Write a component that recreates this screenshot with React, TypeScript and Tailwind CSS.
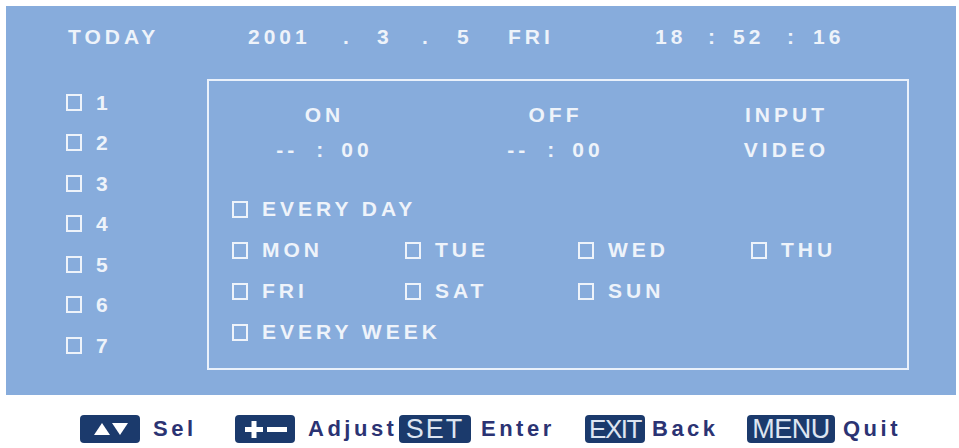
import React from "react";

const FONT = { fontFamily: '"Liberation Sans", Arial, sans-serif' };

const Box: React.FC<{ className?: string }> = ({ className = "" }) => (
  <span className={`inline-block shrink-0 w-[16px] h-[17px] border-2 border-[#eef3fa] ${className}`} />
);

const Check: React.FC<{ label: string; wide?: boolean }> = ({ label, wide }) => (
  <div className={`flex items-center shrink-0 ${wide ? "" : "w-[173px]"}`}>
    <Box className="mr-[14px]" />
    <span>{label}</span>
  </div>
);

const Badge: React.FC<{ w: string; children: React.ReactNode }> = ({ w, children }) => (
  <div className={`${w} shrink-0 h-[28px] rounded-[4px] bg-[#1b3a6c] flex items-center justify-center`}>
    {children}
  </div>
);

export default function App() {
  const slots = ["1", "2", "3", "4", "5", "6", "7"];

  return (
    <div className="w-[959px] h-[448px] bg-white overflow-hidden pt-[6px]" style={FONT}>
      <div className="ml-[6px] w-[950px] h-[389px] bg-[#87acdc] flex flex-col pt-[20px] font-bold text-[21px] tracking-[4px] text-[#eef3fa]">
        {/* header */}
        <div className="flex pl-[62px] leading-[22px]">
          <span className="w-[180px]">TODAY</span>
          <span className="w-[95px]">2001</span>
          <span className="w-[34px]">.</span>
          <span className="w-[45px]">3</span>
          <span className="w-[35px]">.</span>
          <span className="w-[51px]">5</span>
          <span className="w-[147px]">FRI</span>
          <span className="w-[53px]">18</span>
          <span className="w-[25px]">:</span>
          <span className="w-[54px]">52</span>
          <span className="w-[26px]">:</span>
          <span>16</span>
        </div>

        <div className="flex mt-[31px]">
          {/* slot list */}
          <div className="w-[201px] shrink-0 pl-[60px] pt-[3px] flex flex-col">
            {slots.map(s => (
              <div key={s} className="h-[40.5px] flex items-center">
                <Box className="mr-[14px]" />
                <span>{s}</span>
              </div>
            ))}
          </div>

          {/* timer box */}
          <div className="w-[702px] shrink-0 h-[291px] border-2 border-[#eaf1fb] pt-[22px]">
            <div className="grid grid-cols-[231px_231px_231px] leading-[24px] text-center">
              <span>ON</span>
              <span>OFF</span>
              <span>INPUT</span>
            </div>
            <div className="grid grid-cols-[231px_231px_231px] leading-[24px] mt-[11px]">
              {["--", "--"].map((d, i) => (
                <div key={i} className="flex justify-center">
                  <span>{d}</span>
                  <span className="ml-[18px]">:</span>
                  <span className="ml-[14px]">00</span>
                </div>
              ))}
              <span className="text-center">VIDEO</span>
            </div>
            <div className="mt-[26.5px] pl-[23px] flex flex-col">
              <div className="h-[41px] flex items-center">
                <Check label="EVERY DAY" wide />
              </div>
              <div className="h-[41px] flex items-center">
                <Check label="MON" />
                <Check label="TUE" />
                <Check label="WED" />
                <Check label="THU" />
              </div>
              <div className="h-[41px] flex items-center">
                <Check label="FRI" />
                <Check label="SAT" />
                <Check label="SUN" />
              </div>
              <div className="h-[41px] flex items-center">
                <Check label="EVERY WEEK" wide />
              </div>
            </div>
          </div>
        </div>
      </div>

      {/* key legend */}
      <div className="mt-[20px] h-[28px] flex items-center pl-[80px] font-bold text-[22px] tracking-[3.5px] text-[#2b3373] leading-[28px]">
        <Badge w="w-[60px]">
          <svg width="60" height="28" viewBox="0 0 60 28">
            <polygon points="14,20 22,8 30,20" fill="#ffffff" />
            <polygon points="32,8 48,8 40,20" fill="#ffffff" />
          </svg>
        </Badge>
        <span className="w-[82px] shrink-0 ml-[13px]">Sel</span>
        <Badge w="w-[60px]">
          <svg width="60" height="28" viewBox="0 0 60 28">
            <rect x="10" y="12" width="18" height="5" fill="#ffffff" />
            <rect x="16.5" y="6" width="5" height="17" fill="#ffffff" />
            <rect x="32" y="12" width="20" height="5" fill="#ffffff" />
          </svg>
        </Badge>
        <span className="w-[91px] shrink-0 ml-[13px]">Adjust</span>
        <Badge w="w-[72px]">
          <span className="font-normal text-[27px] tracking-[2px] text-[#dde5f1] leading-none">SET</span>
        </Badge>
        <span className="w-[104px] shrink-0 ml-[10px]">Enter</span>
        <Badge w="w-[60px]">
          <span className="font-normal text-[26px] tracking-[-1.5px] text-[#dde5f1] leading-none">EXIT</span>
        </Badge>
        <span className="w-[95px] shrink-0 ml-[7px]">Back</span>
        <Badge w="w-[88px]">
          <span className="font-normal text-[27px] tracking-[-0.5px] text-[#dde5f1] leading-none">MENU</span>
        </Badge>
        <span className="ml-[8px]">Quit</span>
      </div>
    </div>
  );
}
